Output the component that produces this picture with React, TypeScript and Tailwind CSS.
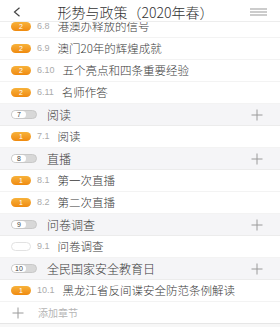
import React from "react";

type Row =
  | { kind: "item"; badge: string; no: string; title: string; empty?: boolean }
  | { kind: "section"; badge: string; title: string };

const rows: Row[] = [
  { kind: "item", badge: "2", no: "6.8", title: "港澳办释放的信号" },
  { kind: "item", badge: "2", no: "6.9", title: "澳门20年的辉煌成就" },
  { kind: "item", badge: "2", no: "6.10", title: "五个亮点和四条重要经验" },
  { kind: "item", badge: "2", no: "6.11", title: "名师作答" },
  { kind: "section", badge: "7", title: "阅读" },
  { kind: "item", badge: "1", no: "7.1", title: "阅读" },
  { kind: "section", badge: "8", title: "直播" },
  { kind: "item", badge: "1", no: "8.1", title: "第一次直播" },
  { kind: "item", badge: "1", no: "8.2", title: "第二次直播" },
  { kind: "section", badge: "9", title: "问卷调查" },
  { kind: "item", badge: "", no: "9.1", title: "问卷调查", empty: true },
  { kind: "section", badge: "10", title: "全民国家安全教育日" },
  { kind: "item", badge: "1", no: "10.1", title: "黑龙江省反间谍安全防范条例解读" },
];

function Plus({ className = "" }: { className?: string }) {
  return (
    <svg width="12" height="12" viewBox="0 0 12 12" className={className}>
      <path d="M6 0.5V11.5M0.5 6H11.5" stroke="#9a9a9a" strokeWidth="1" fill="none" />
    </svg>
  );
}

function ItemRow({ badge, no, title, empty }: { badge: string; no: string; title: string; empty?: boolean }) {
  return (
    <div className="h-[22px] flex items-center pl-[11px] bg-white border-b border-[#f3f3f3]">
      {empty ? (
        <div className="w-[20px] h-[9px] rounded-full border border-[#e2e2e2] bg-white" />
      ) : (
        <div className="w-[20px] h-[9px] rounded-full bg-gradient-to-b from-[#f7b23a] to-[#ef8a0c] flex items-center justify-center text-white text-[7px] leading-none [font-family:'Liberation_Sans',sans-serif]">
          {badge}
        </div>
      )}
      <span className="ml-[6px] mr-[8px] text-[9px] text-[#ababab] [font-family:'Liberation_Sans',sans-serif]">{no}</span>
      <span className="text-[11.5px] font-light text-[#3a3a3a]">{title}</span>
    </div>
  );
}

function SectionRow({ badge, title }: { badge: string; title: string }) {
  return (
    <div className="h-[22px] flex items-center pl-[11px] pr-[17px] bg-[#f5f5f7] border-b border-[#ececec]">
      <div className="w-[26px] h-[9px] rounded-full bg-[#d8d8d8] border border-[#c8c8c8] flex items-center">
        <div className="h-full min-w-[14px] px-[2px] rounded-full bg-white flex items-center justify-center text-[7px] leading-none text-[#444] [font-family:'Liberation_Sans',sans-serif]">
          {badge}
        </div>
      </div>
      <span className="ml-[10px] text-[12px] font-light text-[#3a3a3a]">{title}</span>
      <Plus className="ml-auto" />
    </div>
  );
}

export default function App() {
  return (
    <div className="w-[280px] h-[327px] overflow-hidden bg-white [font-family:'Noto_Sans_CJK_SC','Noto_Sans',sans-serif]">
      <header className="relative z-10 h-[22px] bg-white border-b border-[#ededed] flex items-center px-[13px] pt-[2px]">
        <svg width="8" height="10" viewBox="0 0 8 10">
          <path d="M6.5 0.8L1.5 5L6.5 9.2" stroke="#444" strokeWidth="1.2" fill="none" />
        </svg>
        <div className="flex-1 text-center text-[14px] font-light text-[#333] leading-none">形势与政策（2020年春）</div>
        <svg width="17" height="8" viewBox="0 0 17 8">
          <path d="M0 1H17M0 4H17M0 7H17" stroke="#999" strokeWidth="1" fill="none" />
        </svg>
      </header>
      <div className="-mt-[6px]">
        {rows.map((r, i) =>
          r.kind === "item" ? (
            <ItemRow key={i} badge={r.badge} no={r.no} title={r.title} empty={r.empty} />
          ) : (
            <SectionRow key={i} badge={r.badge} title={r.title} />
          )
        )}
        <div className="h-[22px] flex items-center pl-[12px] bg-white border-b border-[#e6e6e6]">
          <Plus />
          <span className="ml-[14px] text-[10px] text-[#b5b5b5]">添加章节</span>
        </div>
        <div className="h-[20px] bg-[#f7f7f7]" />
      </div>
    </div>
  );
}
